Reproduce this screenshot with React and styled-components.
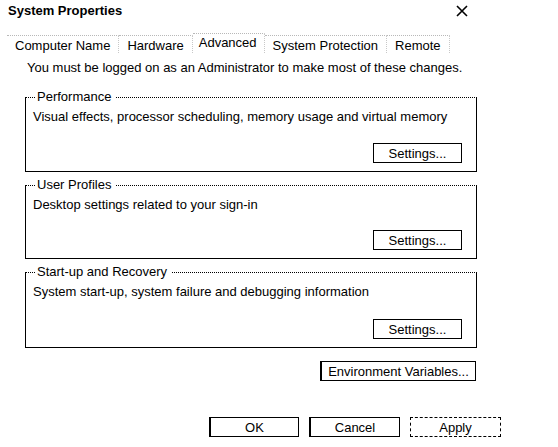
import React from 'react';
import styled, { createGlobalStyle } from 'styled-components';

const Global = createGlobalStyle`
  html, body {
    margin: 0;
    padding: 0;
    background: #fff;
  }
  body {
    font-family: 'Liberation Sans', Arial, sans-serif;
    font-size: 13px;
    color: #000;
  }
`;

const groups = [
  {
    title: 'Performance',
    desc: 'Visual effects, processor scheduling, memory usage and virtual memory',
    height: 82,
  },
  {
    title: 'User Profiles',
    desc: 'Desktop settings related to your sign-in',
    height: 81,
  },
  {
    title: 'Start-up and Recovery',
    desc: 'System start-up, system failure and debugging information',
    height: 83,
  },
];

const tabs = ['Computer Name', 'Hardware', 'Advanced', 'System Protection', 'Remote'];

export default function App() {
  return (
    <Window>
      <Global />
      <TitleBar>
        <Title>System Properties</Title>
        <Close aria-label="Close">
          <svg width="12" height="12" viewBox="0 0 12 12">
            <path d="M1 1 L11 11 M11 1 L1 11" stroke="#000" strokeWidth="1.6" />
          </svg>
        </Close>
      </TitleBar>

      <TabStrip>
        {tabs.map(t => (
          <Tab key={t} $active={t === 'Advanced'}>{t}</Tab>
        ))}
      </TabStrip>

      <Panel>
        <Info>You must be logged on as an Administrator to make most of these changes.</Info>

        {groups.map(g => (
          <Group key={g.title} $h={g.height}>
            <Legend>{g.title}</Legend>
            <Desc>{g.desc}</Desc>
            <GroupFoot>
              <Button $w={89}>Settings...</Button>
            </GroupFoot>
          </Group>
        ))}

        <EnvRow>
          <Button $w={156} $bold>Environment Variables...</Button>
        </EnvRow>
      </Panel>

      <Footer>
        <Button $w={90} $bold>OK</Button>
        <Button $w={91} $bold>Cancel</Button>
        <Button $w={91} $faint>Apply</Button>
      </Footer>
    </Window>
  );
}

const Window = styled.div`
  width: 558px;
  height: 447px;
  background: #fff;
  overflow: hidden;
`;

const TitleBar = styled.div`
  display: flex;
  align-items: center;
  justify-content: space-between;
  width: 470px;
  height: 21px;
  padding-left: 8px;
  box-sizing: border-box;
`;

const Title = styled.div`
  font-weight: bold;
  font-size: 13px;
`;

const Close = styled.div`
  display: flex;
  align-items: center;
  width: 14px;
  height: 14px;
`;

const TabStrip = styled.div`
  display: flex;
  align-items: flex-end;
  margin-top: 12px;
  padding-left: 7px;
  height: 20px;
`;

const Tab = styled.div`
  padding: 0 ${p => (p.$active ? 7 : 8)}px 0 ${p => (p.$active ? 6 : 8)}px;
  height: ${p => (p.$active ? 20 : 18)}px;
  line-height: ${p => (p.$active ? 17 : 19)}px;
  border-top: 1px dotted #b8b8b8;
  border-right: 1px dotted #c8c8c8;
  box-sizing: border-box;
  white-space: nowrap;
`;

const Panel = styled.div`
  padding: 0 0 0 25px;
`;

const Info = styled.div`
  margin: 7px 0 0 2px;
  line-height: 16px;
`;

const Group = styled.fieldset`
  width: 452px;
  height: ${p => p.$h}px;
  margin: 6px 0 0;
  padding: 5px 14px 8px 7px;
  box-sizing: border-box;
  border: 1px solid #000;
  border-top: 1px dotted #000;
  display: flex;
  flex-direction: column;

  &:first-of-type {
    margin-top: 14px;
  }
`;

const Legend = styled.legend`
  padding: 0 4px 0 2px;
  margin-left: 2px;
  line-height: 14px;
`;

const Desc = styled.div`
  line-height: 16px;
`;

const GroupFoot = styled.div`
  margin-top: auto;
  display: flex;
  justify-content: flex-end;
`;

const Button = styled.div`
  width: ${p => p.$w}px;
  height: 20px;
  box-sizing: border-box;
  display: flex;
  align-items: center;
  justify-content: center;
  border: ${p => (p.$faint ? '1px dashed #000' : '1px solid #000')};
  border-left-width: ${p => (p.$bold ? 2 : 1)}px;
  background: #fff;
  font-size: 13px;
`;

const EnvRow = styled.div`
  display: flex;
  justify-content: flex-end;
  width: 451px;
  margin-top: 13px;
`;

const Footer = styled.div`
  display: flex;
  gap: 10px;
  margin: 36px 0 0 209px;
`;
